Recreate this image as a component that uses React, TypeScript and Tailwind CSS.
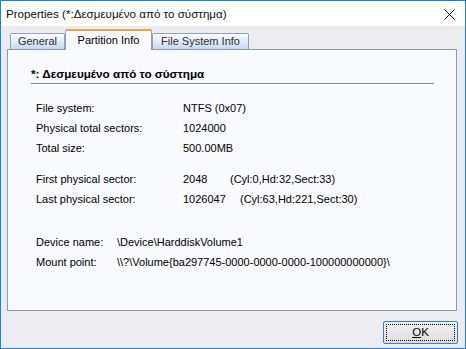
import React from "react";

const font = { fontFamily: '"Liberation Sans", Arial, sans-serif' };

const Row = ({ label, value, extra, labelW, extraGap }: { label: string; value: string; extra?: string; labelW: string; extraGap?: string }) => (
  <div className="flex h-[20px] items-center">
    <div className={labelW}>{label}</div>
    <div className={extraGap}>{value}</div>
    {extra && <div>{extra}</div>}
  </div>
);

export default function App() {
  return (
    <div
      className="w-[466px] h-[349px] border border-[#1883d7] flex flex-col bg-[#ecebef] text-[11px] text-black overflow-hidden"
      style={font}
    >
      {/* title bar */}
      <div className="h-[25px] bg-white flex items-center justify-between pl-[5px] pr-[10px] shrink-0">
        <span className="text-[11.6px] text-[#111]">Properties (*:Δεσμευμένο από το σύστημα)</span>
        <svg width="11" height="11" viewBox="0 0 11 11" className="mt-[1px]">
          <path d="M0.5 0.5 L10.5 10.5 M10.5 0.5 L0.5 10.5" stroke="#111" strokeWidth="1" />
        </svg>
      </div>

      <div className="flex-1 flex flex-col px-[6px] pt-[3px]">
        {/* tabs */}
        <div className="flex items-end pl-[3px] h-[20px] relative z-10">
          <div className="w-[55px] h-[16px] border border-b-0 border-[#8fa2bb] rounded-t-[2px] bg-gradient-to-b from-[#fbfcfe] to-[#c9d9ee] text-[#333] flex items-center justify-center">
            General
          </div>
          <div className="w-[87px] h-[21px] -mb-px border-x border-[#8fa2bb] border-t-2 border-t-[#f2a33a] rounded-t-[2px] bg-[#f9fafe] flex items-center justify-center">
            Partition Info
          </div>
          <div className="w-[97px] h-[16px] border border-b-0 border-[#8fa2bb] rounded-t-[2px] bg-gradient-to-b from-[#fbfcfe] to-[#c9d9ee] text-[#333] flex items-center justify-center">
            File System Info
          </div>
        </div>

        {/* panel */}
        <div className="h-[262px] w-[450px] border border-[#8c9db3] bg-[#f9fafe] pl-[23px] pr-[22px] pt-[14px]">
          <div className="h-[20px] border-b border-[#7d8fab] flex items-center font-bold text-[11.7px]">
            *: Δεσμευμένο από το σύστημα
          </div>
          <div className="pl-[5px] pt-[14px]">
            <Row label="File system:" value="NTFS (0x07)" labelW="w-[147px]" />
            <Row label="Physical total sectors:" value="1024000" labelW="w-[147px]" />
            <Row label="Total size:" value="500.00MB" labelW="w-[147px]" />
            <div className="h-[11px]" />
            <Row label="First physical sector:" value="2048" extra="(Cyl:0,Hd:32,Sect:33)" labelW="w-[147px]" extraGap="w-[47px]" />
            <Row label="Last physical sector:" value="1026047" extra="(Cyl:63,Hd:221,Sect:30)" labelW="w-[147px]" extraGap="w-[57px]" />
            <div className="h-[23px]" />
            <Row label="Device name:" value={"\\Device\\HarddiskVolume1"} labelW="w-[81px]" />
            <Row label="Mount point:" value={"\\\\?\\Volume{ba297745-0000-0000-0000-100000000000}\\"} labelW="w-[81px]" />
          </div>
        </div>

        {/* footer */}
        <div className="flex justify-end pt-[10px] pr-[1px]">
          <button className="w-[75px] h-[23px] border border-[#3a7ebf] rounded-[2px] bg-gradient-to-b from-[#f2f2f2] to-[#dcdcdc] p-[2px]">
            <div className="w-full h-full border border-dotted border-black flex items-center justify-center">
              <span className="text-[11.5px]"><span className="underline">O</span>K</span>
            </div>
          </button>
        </div>
      </div>
    </div>
  );
}
